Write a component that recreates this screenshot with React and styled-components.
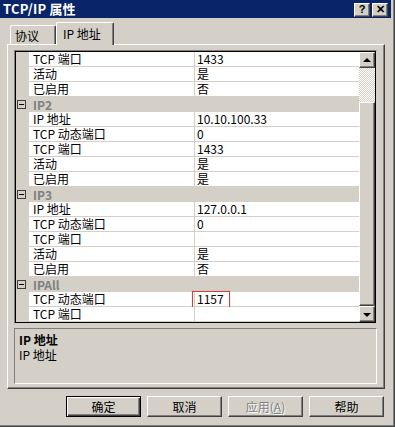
import React from "react";
import styled, { createGlobalStyle } from "styled-components";

const GlobalStyle = createGlobalStyle`
  html, body {
    margin: 0;
    padding: 0;
    background: #d4d0c8;
  }
  body {
    font-family: "Noto Sans CJK SC", "Liberation Sans", sans-serif;
    font-size: 12px;
    color: #000;
  }
`;

const rows = [
  { name: "TCP 端口", value: "1433" },
  { name: "活动", value: "是" },
  { name: "已启用", value: "否" },
  { category: "IP2" },
  { name: "IP 地址", value: "10.10.100.33" },
  { name: "TCP 动态端口", value: "0" },
  { name: "TCP 端口", value: "1433" },
  { name: "活动", value: "是" },
  { name: "已启用", value: "是" },
  { category: "IP3" },
  { name: "IP 地址", value: "127.0.0.1" },
  { name: "TCP 动态端口", value: "0" },
  { name: "TCP 端口", value: "" },
  { name: "活动", value: "是" },
  { name: "已启用", value: "否" },
  { category: "IPAll" },
  { name: "TCP 动态端口", value: "1157", marked: true },
  { name: "TCP 端口", value: "" },
];

function App() {
  return (
    <>
      <GlobalStyle />
      <Window>
        <TitleBar>
          <Title>TCP/IP 属性</Title>
          <CaptionButtons>
            <CaptionButton>?</CaptionButton>
            <CaptionButton>✕</CaptionButton>
          </CaptionButtons>
        </TitleBar>

        <Body>
          <Tabs>
            <Tab>协议</Tab>
            <Tab $active>IP 地址</Tab>
          </Tabs>

          <Panel>
            <Grid>
              <Rows>
                {rows.map((row, i) =>
                  row.category ? (
                    <CategoryRow key={i}>
                      <Gutter>
                        <Collapse />
                      </Gutter>
                      <CategoryName>{row.category}</CategoryName>
                    </CategoryRow>
                  ) : (
                    <Row key={i}>
                      <Gutter />
                      <NameCell>{row.name}</NameCell>
                      <ValueCell>
                        {row.value}
                        {row.marked && <Mark />}
                      </ValueCell>
                    </Row>
                  )
                )}
              </Rows>
              <Scrollbar>
                <ArrowButton>
                  <Arrow $dir="up" />
                </ArrowButton>
                <Track $size={34} />
                <Thumb />
                <Track $size={0} />
                <ArrowButton>
                  <Arrow $dir="down" />
                </ArrowButton>
              </Scrollbar>
            </Grid>

            <Description>
              <DescTitle>IP 地址</DescTitle>
              <DescText>IP 地址</DescText>
            </Description>
          </Panel>

          <Buttons>
            <Button $default>确定</Button>
            <Button>取消</Button>
            <Button $disabled>
              应用(<u>A</u>)
            </Button>
            <Button>帮助</Button>
          </Buttons>
        </Body>
      </Window>
    </>
  );
}

const raised = `
  background: #d4d0c8;
  border: 1px solid;
  border-color: #fff #404040 #404040 #fff;
  box-shadow: inset -1px -1px #808080;
  box-sizing: border-box;
`;

const Window = styled.div`
  width: 395px;
  height: 427px;
  box-sizing: border-box;
  background: #d4d0c8;
  display: flex;
  flex-direction: column;
  padding: 0 3px 3px 0;
  border-right: 1px solid #404040;
  border-bottom: 1px solid #404040;
  box-shadow: inset -1px -1px #808080;
  overflow: hidden;
`;

const TitleBar = styled.div`
  height: 18px;
  background: #0a246a;
  display: flex;
  align-items: center;
  justify-content: space-between;
  padding: 0 3px 0 3px;
  flex-shrink: 0;
`;

const Title = styled.div`
  color: #fff;
  font-weight: bold;
  font-size: 13px;
  line-height: 18px;
  letter-spacing: 0.2px;
`;

const CaptionButtons = styled.div`
  display: flex;
  gap: 2px;
  padding-top: 1px;
`;

const CaptionButton = styled.div`
  ${raised}
  width: 16px;
  height: 14px;
  display: flex;
  align-items: center;
  justify-content: center;
  font-family: "Liberation Sans", sans-serif;
  font-weight: bold;
  font-size: 11px;
  line-height: 1;
  color: #000;
`;

const Body = styled.div`
  flex: 1;
  display: flex;
  flex-direction: column;
  padding: 4px 6px 0 7px;
`;

const Tabs = styled.div`
  display: flex;
  align-items: flex-end;
  height: 22px;
  padding-left: 3px;
  position: relative;
  z-index: 1;
`;

const Tab = styled.div`
  box-sizing: border-box;
  background: #d4d0c8;
  border-top: 1px solid #fff;
  border-left: 1px solid #fff;
  border-right: 1px solid #404040;
  box-shadow: inset -1px 0 #808080;
  border-radius: 2px 2px 0 0;
  font-size: 12px;
  display: flex;
  align-items: center;
  width: ${(p) => (p.$active ? "58px" : "46px")};
  height: ${(p) => (p.$active ? "23px" : "19px")};
  margin-bottom: ${(p) => (p.$active ? "-1px" : "0")};
  padding: ${(p) => (p.$active ? "0 0 2px 6px" : "0 0 0 4px")};
`;

const Panel = styled.div`
  box-sizing: border-box;
  height: 345px;
  border-top: 1px solid #fff;
  border-left: 1px solid #fff;
  border-right: 1px solid #404040;
  border-bottom: 1px solid #404040;
  box-shadow: inset -1px -1px #808080;
  padding: 5px 7px 4px 6px;
  display: flex;
  flex-direction: column;
  gap: 4px;
`;

const Grid = styled.div`
  display: flex;
  height: 274px;
  box-sizing: border-box;
  border: 1px solid;
  border-color: #808080 #d4d0c8 #d4d0c8 #808080;
  box-shadow: inset 0 0 0 1px #000;
  padding: 1px;
  background: #fff;
`;

const Rows = styled.div`
  flex: 1;
  display: flex;
  flex-direction: column;
`;

const Row = styled.div`
  display: grid;
  grid-template-columns: 13px 166px 1fr;
  height: 15px;
  flex-shrink: 0;
`;

const CategoryRow = styled(Row)`
  background: #d4d0c8;
`;

const Gutter = styled.div`
  background: #d4d0c8;
  display: flex;
  align-items: center;
  padding-left: 1px;
`;

const Collapse = styled.div`
  width: 9px;
  height: 9px;
  box-sizing: border-box;
  border: 1px solid #404040;
  position: relative;

  &::after {
    content: "";
    position: absolute;
    left: 1px;
    right: 1px;
    top: 3px;
    height: 1px;
    background: #000;
  }
`;

const cell = `
  box-sizing: border-box;
  border-bottom: 1px solid #d4d0c8;
  font-size: 12px;
  line-height: 14px;
  white-space: nowrap;
  padding-left: 4px;
  position: relative;
`;

const NameCell = styled.div`
  ${cell}
  background: #fff;
  border-right: 1px solid #d4d0c8;
`;

const ValueCell = styled.div`
  ${cell}
  background: #fff;
  padding-left: 2px;
`;

const CategoryName = styled.div`
  grid-column: 2 / 4;
  font-weight: bold;
  color: #808080;
  font-size: 12px;
  line-height: 15px;
  padding-left: 4px;
`;

const Mark = styled.div`
  position: absolute;
  left: -3px;
  top: -1px;
  width: 38px;
  height: 17px;
  box-sizing: border-box;
  border: 1px solid #d0403c;
  box-shadow: 0 0 1px rgba(220, 80, 80, 0.5);
`;

const Scrollbar = styled.div`
  width: 16px;
  display: flex;
  flex-direction: column;
`;

const ArrowButton = styled.div`
  ${raised}
  width: 16px;
  height: 16px;
  display: flex;
  align-items: center;
  justify-content: center;
  flex-shrink: 0;
`;

const Arrow = styled.div`
  width: 0;
  height: 0;
  border-left: 4px solid transparent;
  border-right: 4px solid transparent;
  ${(p) =>
    p.$dir === "up"
      ? "border-bottom: 4px solid #000; margin-top: -1px;"
      : "border-top: 4px solid #000; margin-top: 1px;"}
`;

const Track = styled.div`
  height: ${(p) => p.$size}px;
  flex-shrink: 0;
  background: repeating-conic-gradient(#fff 0 25%, #d4d0c8 0 50%) 0 0 / 2px 2px;
`;

const Thumb = styled.div`
  ${raised}
  flex: 1;
`;

const Description = styled.div`
  height: 56px;
  box-sizing: border-box;
  border: 1px solid;
  border-color: #808080 #fff #fff #808080;
  padding: 3px 4px;
  font-size: 12px;
  line-height: 15px;
`;

const DescTitle = styled.div`
  font-weight: bold;
`;

const DescText = styled.div``;

const Buttons = styled.div`
  display: flex;
  justify-content: flex-end;
  gap: 6px;
  margin-top: 7px;
  padding-right: 1px;
`;

const Button = styled.div`
  ${raised}
  width: 75px;
  height: 21px;
  display: flex;
  align-items: center;
  justify-content: center;
  font-size: 12px;
  color: ${(p) => (p.$disabled ? "#808080" : "#000")};
  text-shadow: ${(p) => (p.$disabled ? "1px 1px #fff" : "none")};
  ${(p) =>
    p.$default &&
    `
    border: 1px solid #000;
    box-shadow: inset 1px 1px #fff, inset -1px -1px #404040, inset -2px -2px #808080;
  `}

  u {
    text-decoration: underline;
  }
`;

export default App;
